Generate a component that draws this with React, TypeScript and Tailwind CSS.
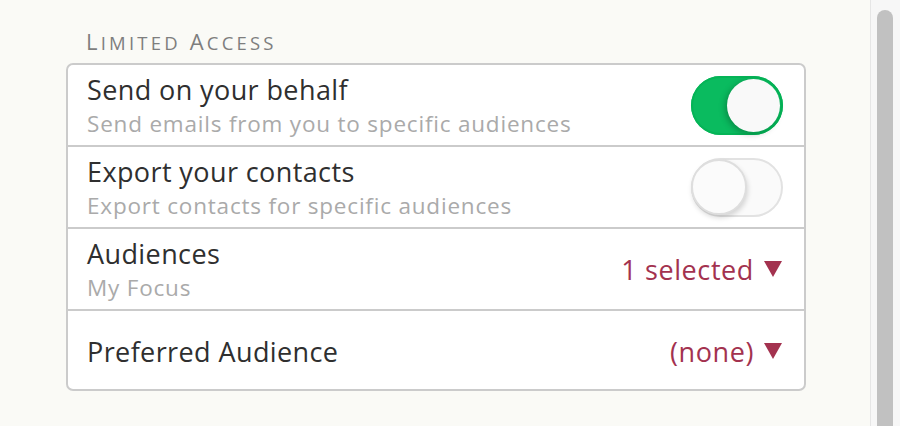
import React from "react";

const FONT = "font-['Open_Sans','Lato',sans-serif]";

function Toggle({ on }: { on: boolean }) {
  if (on) {
    return (
      <div className="relative flex h-[59px] w-[92px] shrink-0 items-center justify-end rounded-full bg-[#0abb5f] p-[3px] shadow-[inset_0_0_0_2px_#05b457]">
        <div className="h-[53px] w-[53px] rounded-full bg-[#f9f9f9] shadow-[-2px_2px_6px_rgba(0,0,0,0.25)]" />
      </div>
    );
  }
  return (
    <div className="relative flex h-[59px] w-[92px] shrink-0 items-center justify-start rounded-full border-2 border-[#e2e2e2] bg-[#fafafa]">
      <div className="-ml-[2px] h-[56px] w-[56px] rounded-full border-2 border-[#dedede] bg-[#fbfbfb] shadow-[1px_3px_5px_rgba(0,0,0,0.15)]" />
    </div>
  );
}

function Caret() {
  return (
    <svg width="20" height="18" viewBox="0 0 20 18" className="ml-[9px]">
      <path d="M1 1 H19 L10 17 Z" fill="#a3324f" />
    </svg>
  );
}

type Row = {
  title: string;
  sub?: string;
  toggle?: boolean;
  value?: string;
};

const rows: Row[] = [
  { title: "Send on your behalf", sub: "Send emails from you to specific audiences", toggle: true },
  { title: "Export your contacts", sub: "Export contacts for specific audiences", toggle: false },
  { title: "Audiences", sub: "My Focus", value: "1 selected" },
  { title: "Preferred Audience", value: "(none)" },
];

const rowHeights = ["h-[80px]", "h-[82px]", "h-[82px]", "h-[80px] pt-[2px]"];

export default function App() {
  return (
    <div className={`flex h-[426px] w-[900px] overflow-hidden bg-[#fafaf6] ${FONT}`}>
      <div className="flex-1 pl-[66px] pr-[64px] pt-[26px]">
        <div className="h-[30px] pl-[20px] text-[22px] leading-[30px] tracking-[3.2px] text-[#7e7e7e]">
          L<span className="text-[18.5px]">IMITED</span> A<span className="text-[18.5px]">CCESS</span>
        </div>
        <div className="mt-[7px] overflow-hidden rounded-[7px] border-2 border-[#cbcbcb] bg-white">
          {rows.map((r, i) => (
            <div
              key={r.title}
              className={`flex items-center justify-between pl-[19px] pr-[21px] ${rowHeights[i]} ${i > 0 ? "border-t-2 border-[#cbcbcb]" : ""}`}
            >
              <div className={`flex flex-col ${r.sub ? "pb-[1px]" : ""}`}>
                <div className="text-[27px] leading-[37px] tracking-[0.4px] text-[#2f2f2f]">{r.title}</div>
                {r.sub && (
                  <div className="text-[22.5px] leading-[31px] tracking-[0.8px] text-[#aaaaaa]">{r.sub}</div>
                )}
              </div>
              {r.toggle !== undefined && <Toggle on={r.toggle} />}
              {r.value && (
                <div className="flex items-center text-[27px] leading-[37px] tracking-[0.6px] text-[#a3324f]">
                  {r.value}
                  <Caret />
                </div>
              )}
            </div>
          ))}
        </div>
      </div>
      <div className="flex w-[30px] shrink-0 justify-center border-l border-[#e6e6e6] bg-[#f7f7f7] pt-[10px]">
        <div className="ml-[-2px] h-[460px] w-[16px] rounded-full bg-[#c1c1c1]" />
      </div>
    </div>
  );
}
